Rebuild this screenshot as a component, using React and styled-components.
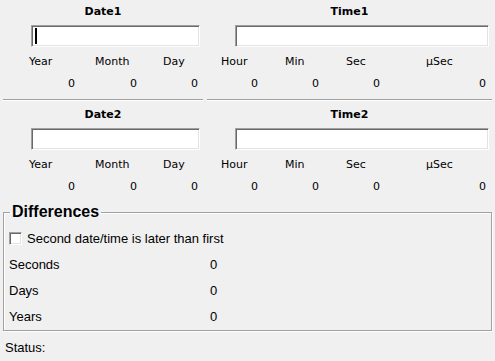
import React from 'react'
import styled, { createGlobalStyle } from 'styled-components'

const GlobalStyle = createGlobalStyle`
  html, body {
    margin: 0;
    padding: 0;
    background: #f0f0f0;
  }

  body {
    width: 495px;
    height: 361px;
    overflow: hidden;
    font-family: "Liberation Sans", Arial, sans-serif;
    color: #000;
  }
`

const dateFields = [
  { label: 'Year', ml: 26, w: 46 },
  { label: 'Month', ml: 20, w: 42 },
  { label: 'Day', ml: 26, w: 35 }
]

const timeFields = [
  { label: 'Hour', ml: 14, w: 37 },
  { label: 'Min', ml: 27, w: 34 },
  { label: 'Sec', ml: 27, w: 34 },
  { label: 'µSec', ml: 46, w: 60 }
]

const diffRows = ['Seconds', 'Days', 'Years']

const Window = styled.div`
  width: 495px;
  height: 361px;
  background: #f0f0f0;
`

const Section = styled.div`
  display: grid;
  grid-template-columns: 200px 285px;
  column-gap: 4px;
  margin-left: 3px;
  margin-bottom: ${p => (p.$divided ? '3px' : '0')};
`

const Panel = styled.div`
  display: flex;
  flex-direction: column;
  padding-bottom: ${p => (p.$divided ? '9px' : '0')};
  border-bottom: ${p => (p.$divided ? '1px solid #a0a0a0' : 'none')};
  box-shadow: ${p => (p.$divided ? '0 1px 0 #ffffff' : 'none')};
`

const PanelTitle = styled.div`
  height: 25px;
  line-height: 23px;
  text-align: center;
  font-family: "DejaVu Sans", Verdana, sans-serif;
  font-weight: bold;
  font-size: 11px;
`

const TextBox = styled.div`
  box-sizing: border-box;
  height: 22px;
  margin: 0 3px 0 28px;
  padding-left: 3px;
  display: flex;
  align-items: center;
  background: #fff;
  border: 1px solid;
  border-color: #a0a0a0 #ffffff #ffffff #a0a0a0;
  box-shadow: inset 1px 1px 0 #696969, inset -1px -1px 0 #e3e3e3;
`

const Caret = styled.span`
  width: 2px;
  height: 16px;
  background: #000;
`

const FieldRow = styled.div`
  display: flex;
  font-family: "DejaVu Sans", Verdana, sans-serif;
  font-size: 11px;
  line-height: 13px;
`

const Field = styled.div`
  display: flex;
  flex-direction: column;
  margin-left: ${p => p.$ml}px;
  width: ${p => p.$w}px;
`

const FieldLabel = styled.div`
  padding-top: 8px;
  text-align: left;
  white-space: nowrap;
`

const FieldValue = styled.div`
  padding-top: 9px;
  text-align: right;
`

const GroupBox = styled.fieldset`
  box-sizing: border-box;
  width: 489px;
  margin: 10px 0 0 3px;
  padding: 4px 5px 0 5px;
  border: 1px solid #a0a0a0;
  box-shadow: 1px 1px 0 #ffffff, inset 1px 1px 0 #ffffff;
  font-size: 13px;
`

const GroupTitle = styled.legend`
  margin-left: 1px;
  padding: 0 2px;
  font-weight: bold;
  font-size: 16px;
  line-height: 18px;
`

const CheckRow = styled.label`
  display: flex;
  align-items: center;
  gap: 5px;
  height: 27px;
`

const CheckBox = styled.span`
  box-sizing: border-box;
  width: 13px;
  height: 13px;
  background: #fff;
  border: 1px solid;
  border-color: #a0a0a0 #ffffff #ffffff #a0a0a0;
  box-shadow: inset 1px 1px 0 #696969, inset -1px -1px 0 #e3e3e3;
`

const DiffRow = styled.div`
  display: grid;
  grid-template-columns: 201px auto;
  height: 26px;
  line-height: 26px;
`

const StatusBar = styled.div`
  margin-top: 9px;
  padding-left: 5px;
  font-size: 13px;
  line-height: 16px;
`

const Fields = ({ items }) => (
  <FieldRow>
    {items.map(f => (
      <Field key={f.label} $ml={f.ml} $w={f.w}>
        <FieldLabel>{f.label}</FieldLabel>
        <FieldValue>0</FieldValue>
      </Field>
    ))}
  </FieldRow>
)

const DateTimeSection = ({ index, divided, focused }) => (
  <Section $divided={divided}>
    <Panel $divided={divided}>
      <PanelTitle>{`Date${index}`}</PanelTitle>
      <TextBox>{focused && <Caret />}</TextBox>
      <Fields items={dateFields} />
    </Panel>
    <Panel $divided={divided}>
      <PanelTitle>{`Time${index}`}</PanelTitle>
      <TextBox />
      <Fields items={timeFields} />
    </Panel>
  </Section>
)

export default function App() {
  return (
    <Window>
      <GlobalStyle />
      <DateTimeSection index={1} divided focused />
      <DateTimeSection index={2} />
      <GroupBox>
        <GroupTitle>Differences</GroupTitle>
        <CheckRow>
          <CheckBox />
          Second date/time is later than first
        </CheckRow>
        {diffRows.map(r => (
          <DiffRow key={r}>
            <span>{r}</span>
            <span>0</span>
          </DiffRow>
        ))}
      </GroupBox>
      <StatusBar>Status:</StatusBar>
    </Window>
  )
}
